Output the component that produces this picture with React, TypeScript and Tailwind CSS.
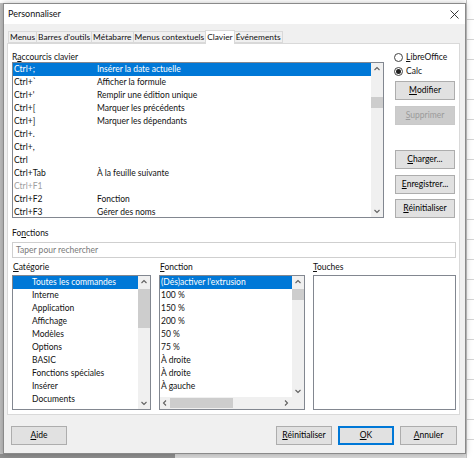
import type { ReactNode } from "react";

const FONT = "font-['Lato',sans-serif]";

function U({ children }: { children: ReactNode }) {
  return <span className="underline underline-offset-[1px] decoration-[0.5px]">{children}</span>;
}

function Btn({
  children,
  disabled = false,
  focused = false,
  className = "",
}: {
  children: ReactNode;
  disabled?: boolean;
  focused?: boolean;
  className?: string;
}) {
  const look = disabled
    ? "border-[#c9c9c9] bg-[#cccccc] text-[#9b9b9b]"
    : focused
    ? "border-[#0078d7] bg-[#e1e1e1] text-black outline outline-1 -outline-offset-2 outline-[#0078d7]"
    : "border-[#adadad] bg-[#e1e1e1] text-black";
  return (
    <div className={`flex h-[19px] items-center justify-center border ${look} ${className}`}>
      {children}
    </div>
  );
}

function Chevron({ dir }: { dir: "up" | "down" | "left" | "right" }) {
  const d = {
    up: "M1.5 5 L4 2.5 L6.5 5",
    down: "M1.5 3 L4 5.5 L6.5 3",
    left: "M5 1.5 L2.5 4 L5 6.5",
    right: "M3 1.5 L5.5 4 L3 6.5",
  }[dir];
  return (
    <svg width="8" height="8" viewBox="0 0 8 8">
      <path d={d} fill="none" stroke="#606060" strokeWidth="1.1" />
    </svg>
  );
}

function VScroll({ before, thumb }: { before: string; thumb: string }) {
  return (
    <div className="flex w-[12px] shrink-0 flex-col bg-[#f0f0f0]">
      <div className="flex h-[12px] items-center justify-center">
        <Chevron dir="up" />
      </div>
      <div className={before} />
      <div className={`${thumb} bg-[#cdcdcd]`} />
      <div className="flex-1" />
      <div className="flex h-[12px] items-center justify-center">
        <Chevron dir="down" />
      </div>
    </div>
  );
}

const shortcuts: [string, string, boolean?][] = [
  ["Ctrl+;", "Insérer la date actuelle"],
  ["Ctrl+`", "Afficher la formule"],
  ["Ctrl+'", "Remplir une édition unique"],
  ["Ctrl+[", "Marquer les précédents"],
  ["Ctrl+]", "Marquer les dépendants"],
  ["Ctrl+.", ""],
  ["Ctrl+,", ""],
  ["Ctrl", ""],
  ["Ctrl+Tab", "À la feuille suivante"],
  ["Ctrl+F1", "", true],
  ["Ctrl+F2", "Fonction"],
  ["Ctrl+F3", "Gérer des noms"],
];

const categories = [
  "Toutes les commandes",
  "Interne",
  "Application",
  "Affichage",
  "Modèles",
  "Options",
  "BASIC",
  "Fonctions spéciales",
  "Insérer",
  "Documents",
];

const functions = [
  "(Dés)activer l'extrusion",
  "100 %",
  "150 %",
  "200 %",
  "50 %",
  "75 %",
  "À droite",
  "À droite",
  "À gauche",
];

const tabs = ["Menus", "Barres d'outils", "Métabarre", "Menus contextuels", "Clavier", "Événements"];

export default function App() {
  return (
    <div className={`${FONT} relative h-[458px] w-[474px] overflow-hidden bg-[#bfbfbf] text-[8.5px] text-[#111]`}>
      {/* spreadsheet behind the dialog */}
      <div className="absolute left-0 top-0 h-[3px] w-full bg-white" />
      <div className="absolute right-0 top-0 h-full w-[8px] border-l border-[#c6c6c6] bg-white bg-[repeating-linear-gradient(to_bottom,transparent_0px,transparent_19px,#d4d4d4_19px,#d4d4d4_20px)]" />
      <div className="absolute bottom-0 left-0 h-[4px] w-[175px] bg-[#8f8f8f]" />
      <div className="absolute bottom-0 left-[175px] h-[4px] w-[291px] bg-[#d9d9d9]" />

      {/* dialog */}
      <div className="relative ml-[3px] mt-[3px] flex h-[451px] w-[463px] flex-col border border-[#8a8a8a] bg-[#f0f0f0] shadow-[0_0_6px_rgba(0,0,0,0.25)]">
        <div className="flex h-[20px] shrink-0 items-center justify-between bg-white pl-[4px] pr-[6px]">
          <span className="text-[9px]">Personnaliser</span>
          <svg width="9" height="9" viewBox="0 0 9 9">
            <path d="M0.5 0.5 L8.5 8.5 M8.5 0.5 L0.5 8.5" stroke="#222" strokeWidth="0.9" />
          </svg>
        </div>

        <div className="flex flex-1 flex-col pl-[3px] pr-[5px] pt-[7px]">
          {/* tabs */}
          <div className="relative z-10 ml-[1px] flex h-[12px] items-end text-[8.4px]">
            {tabs.map((t) => (
              <div
                key={t}
                className={
                  t === "Clavier"
                    ? "-mb-[1px] -ml-[1px] flex h-[14px] items-center border border-b-0 border-[#d9d9d9] bg-white px-[1px]"
                    : "-ml-[1px] flex h-[12px] items-center border border-[#d9d9d9] bg-[#f0f0f0] px-[1px] first:ml-0"
                }
              >
                {t}
              </div>
            ))}
          </div>

          {/* panel */}
          <div className="flex h-[372px] flex-col border border-[#d9d9d9] bg-white pl-[4px] pr-[3px] pt-[6px]">
            <div className="flex items-start">
              <div className="flex w-[372px] flex-col">
                <div className="h-[12px] leading-[14px]">
                  R<U>a</U>ccourcis clavier
                </div>
                <div className="flex h-[156px] border border-[#828790]">
                  <div className="flex-1">
                    {shortcuts.map(([k, v, dis], i) => (
                      <div
                        key={k + i}
                        className={`flex h-[13px] items-center pl-[1px] ${i === 0 ? "bg-[#0078d7] text-white" : ""} ${dis ? "text-[#a0a0a0]" : ""}`}
                      >
                        <span className="w-[83px] shrink-0">{k}</span>
                        <span>{v}</span>
                      </div>
                    ))}
                  </div>
                  <VScroll before="h-[22px]" thumb="h-[11px]" />
                </div>
              </div>

              <div className="ml-[11px] flex w-[60px] flex-col">
                <div className="-ml-[1px] flex h-[14px] items-center gap-[3px]">
                  <span className="h-[9px] w-[9px] rounded-full border border-[#444] bg-white" />
                  <span>
                    <U>L</U>ibreOffice
                  </span>
                </div>
                <div className="-ml-[1px] flex h-[14px] items-center gap-[3px]">
                  <span className="flex h-[9px] w-[9px] items-center justify-center rounded-full border border-[#444] bg-white">
                    <span className="h-[5px] w-[5px] rounded-full bg-[#222]" />
                  </span>
                  <span>Calc</span>
                </div>
                <Btn className="mt-[3px]">
                  <U>M</U>odifier
                </Btn>
                <Btn disabled className="mt-[6px]">
                  <U>S</U>upprimer
                </Btn>
                <Btn className="mt-[25px]">
                  <U>C</U>harger...
                </Btn>
                <Btn className="mt-[6px]">
                  <U>E</U>nregistrer...
                </Btn>
                <Btn className="mt-[5px]">
                  <U>R</U>éinitialiser
                </Btn>
              </div>
            </div>

            <div className="mt-[9px] h-[12px] leading-[12px]">
              Fo<U>n</U>ctions
            </div>
            <div className="mt-[3px] flex h-[16px] w-[444px] items-center border border-[#cfcfcf] bg-white pl-[3px] text-[#7a7a7a]">
              Taper pour rechercher
            </div>

            <div className="mt-[3px] flex h-[12px] w-[444px] gap-[8px] leading-[12px]">
              <div className="w-[139px] pl-[1px]">
                <U>C</U>atégorie
              </div>
              <div className="w-[146px] pl-[1px]">
                <U>F</U>onction
              </div>
              <div className="w-[143px]">
                <U>T</U>ouches
              </div>
            </div>

            <div className="mt-[2px] flex h-[135px] w-[444px] gap-[8px]">
              <div className="flex w-[139px] border border-[#828790]">
                <div className="flex-1">
                  {categories.map((c, i) => (
                    <div
                      key={c}
                      className={`flex h-[13px] items-center pl-[19px] ${i === 0 ? "bg-[#0078d7] text-white" : ""}`}
                    >
                      {c}
                    </div>
                  ))}
                </div>
                <VScroll before="h-[1px]" thumb="h-[39px]" />
              </div>

              <div className="flex w-[146px] flex-col border border-[#828790]">
                <div className="flex flex-1">
                  <div className="flex-1 overflow-hidden">
                    {functions.map((f, i) => (
                      <div
                        key={f + i}
                        className={`flex h-[13px] items-center whitespace-nowrap pl-[1px] ${i === 0 ? "bg-[#0078d7] text-white" : ""}`}
                      >
                        {f}
                      </div>
                    ))}
                  </div>
                  <VScroll before="h-[1px]" thumb="h-[11px]" />
                </div>
                <div className="flex h-[12px]">
                  <div className="flex flex-1 items-center bg-[#f0f0f0]">
                    <div className="flex w-[10px] justify-center">
                      <Chevron dir="left" />
                    </div>
                    <div className="h-[10px] w-[63px] bg-[#cdcdcd]" />
                    <div className="flex-1" />
                    <div className="flex w-[12px] justify-center">
                      <Chevron dir="right" />
                    </div>
                  </div>
                  <div className="w-[12px] bg-[#f0f0f0]" />
                </div>
              </div>

              <div className="w-[143px] border border-[#828790] bg-white" />
            </div>
          </div>

          {/* footer buttons */}
          <div className="mt-[11px] flex pr-[3px]">
            <Btn className="ml-[4px] w-[56px]">
              <U>A</U>ide
            </Btn>
            <div className="flex-1" />
            <Btn className="w-[56px]">
              <U>R</U>éinitialiser
            </Btn>
            <Btn focused className="ml-[6px] w-[56px]">
              <U>O</U>K
            </Btn>
            <Btn className="ml-[6px] w-[57px]">
              <U>A</U>nnuler
            </Btn>
          </div>
        </div>
      </div>
    </div>
  );
}
